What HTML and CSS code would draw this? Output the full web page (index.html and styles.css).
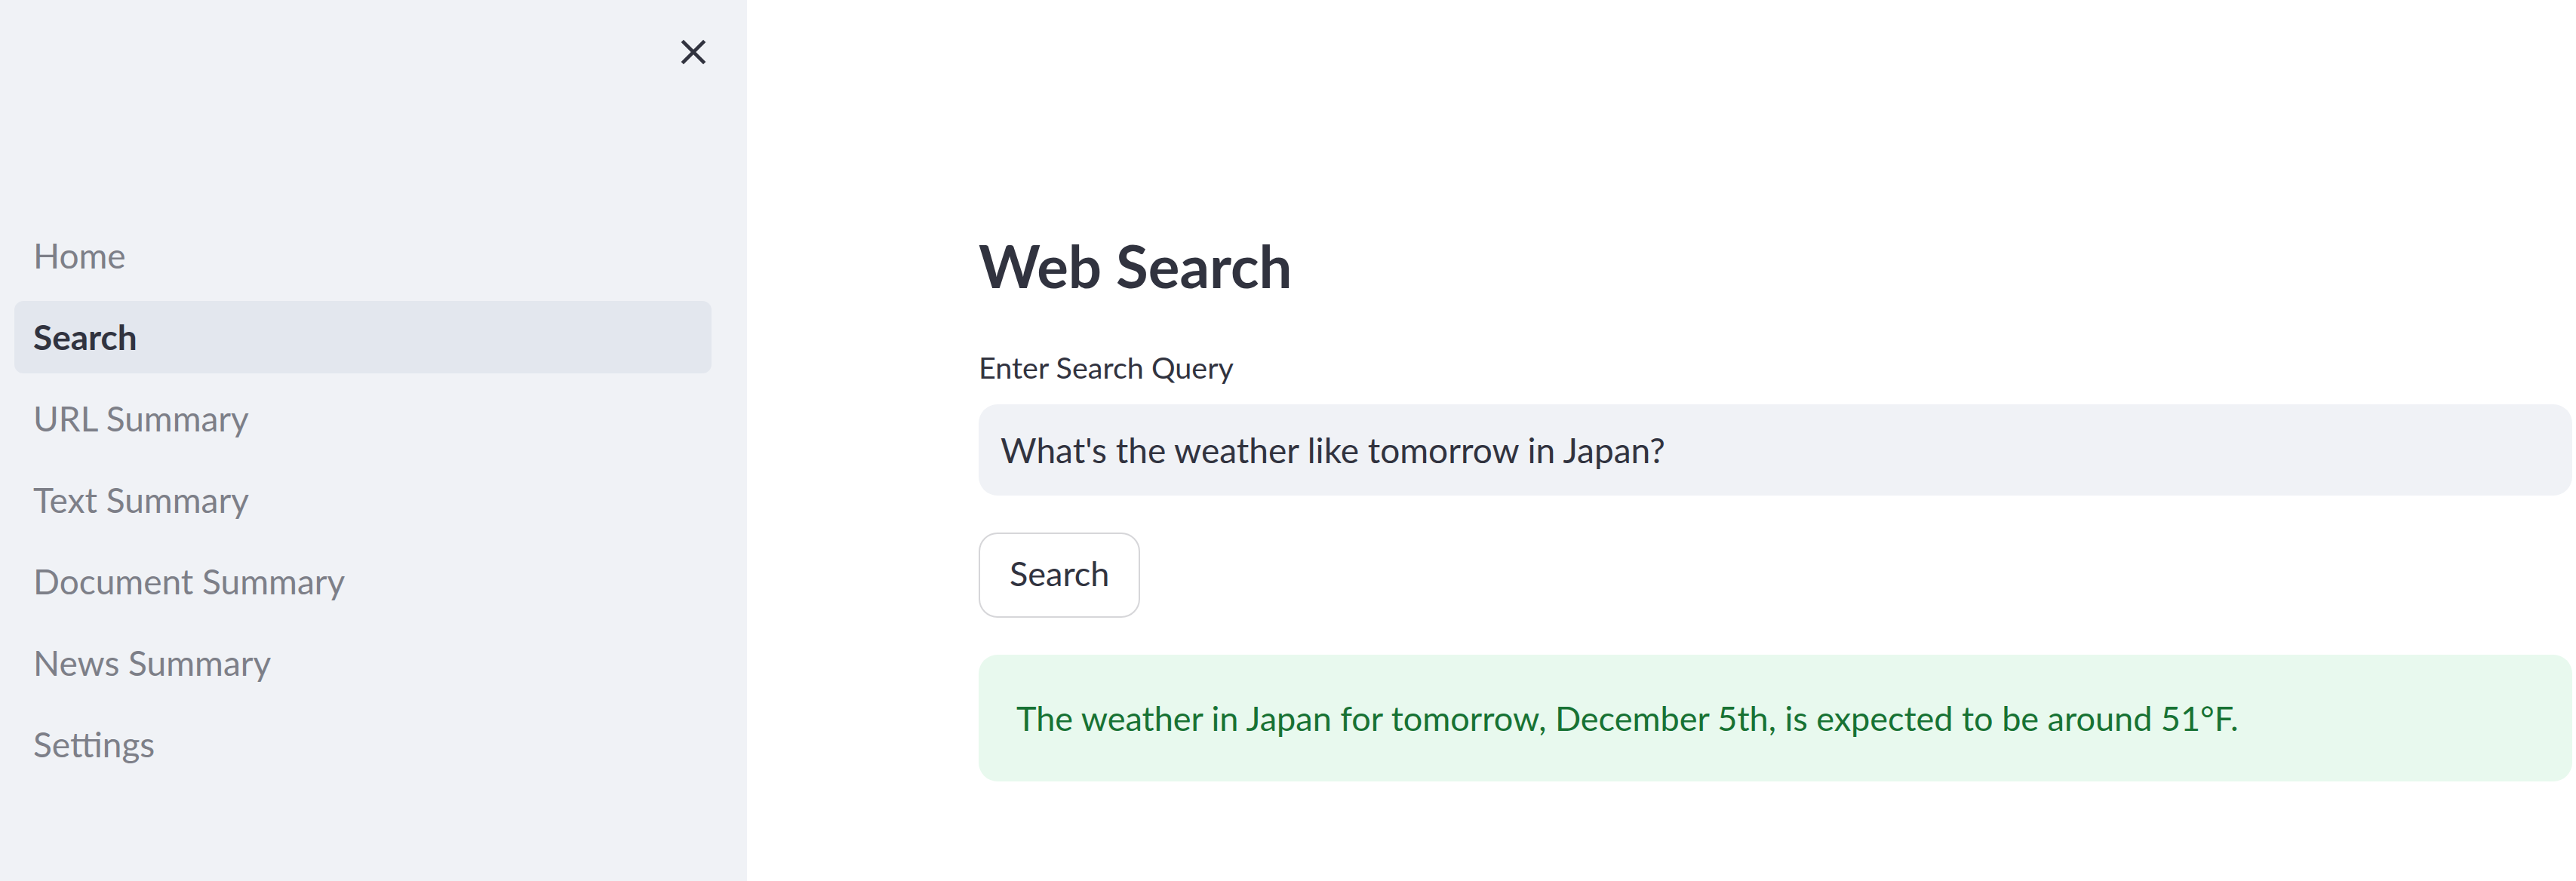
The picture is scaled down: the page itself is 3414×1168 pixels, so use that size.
FILE: index.html
```html
<!DOCTYPE html>
<html lang="en">
<head>
<meta charset="utf-8">
<title>Web Search</title>
<link rel="stylesheet" href="styles.css">
</head>
<body>
<div class="app">
  <aside class="sidebar">
    <div class="sidebar-header">
      <button class="close-btn" aria-label="Close sidebar">
        <svg viewBox="0 0 24 24" width="56" height="56"><path d="M19 6.41L17.59 5 12 10.59 6.41 5 5 6.41 10.59 12 5 17.59 6.41 19 12 13.41 17.59 19 19 17.59 13.41 12z"/></svg>
      </button>
    </div>
    <nav class="nav">
      <a class="nav-item">Home</a>
      <a class="nav-item active">Search</a>
      <a class="nav-item">URL Summary</a>
      <a class="nav-item">Text Summary</a>
      <a class="nav-item">Document Summary</a>
      <a class="nav-item">News Summary</a>
      <a class="nav-item">Settings</a>
    </nav>
  </aside>
  <main class="main">
    <h1 class="title">Web Search</h1>
    <label class="field-label" for="q">Enter Search Query</label>
    <input class="text-input" id="q" type="text" value="What's the weather like tomorrow in Japan?">
    <button class="btn">Search</button>
    <div class="alert-success">The weather in Japan for tomorrow, December 5th, is expected to be around 51°F.</div>
  </main>
</div>
</body>
</html>
```
FILE: styles.css
```css
* { box-sizing: border-box; }
html, body { margin: 0; padding: 0; height: 100%; }
body {
  font-family: "Lato", "Liberation Sans", sans-serif;
  color: #31333f;
  background: #ffffff;
  overflow: hidden;
}
.app {
  display: flex;
  height: 1168px;
}
.sidebar {
  width: 990px;
  flex: 0 0 990px;
  background: #f0f2f6;
  display: flex;
  flex-direction: column;
  padding: 0 47px 0 19px;
}
.sidebar-header {
  height: 291px;
  display: flex;
  justify-content: flex-end;
  align-items: flex-start;
  padding-top: 41px;
  margin-right: -4px;
}
.close-btn {
  width: 56px;
  height: 56px;
  padding: 0;
  border: none;
  background: transparent;
  display: flex;
}
.close-btn svg { fill: #31333f; }
.nav {
  display: flex;
  flex-direction: column;
  gap: 12px;
}
.nav-item {
  display: block;
  height: 96px;
  line-height: 96px;
  padding-left: 25px;
  font-size: 46px;
  color: #7d7f88;
  border-radius: 12px;
}
.nav-item.active {
  background: #e3e7ee;
  color: #31333f;
  font-weight: 700;
}
.main {
  flex: 1;
  padding: 306px 5px 0 307px;
  display: flex;
  flex-direction: column;
  align-items: flex-start;
}
.title {
  margin: 0;
  font-size: 78px;
  line-height: 93px;
  font-weight: 700;
  color: #31333f;
}
.field-label {
  margin-top: 64px;
  font-size: 39.5px;
  line-height: 48px;
  color: #31333f;
}
.text-input {
  margin-top: 25px;
  width: 100%;
  height: 121px;
  border: none;
  outline: none;
  border-radius: 25px;
  background: #f0f2f6;
  padding: 0 29px;
  font-family: inherit;
  font-size: 46px;
  color: #31333f;
}
.btn {
  margin-top: 49px;
  height: 113px;
  padding: 0 39px 4px;
  line-height: 105px;
  border: 2px solid #d6d6d9;
  border-radius: 25px;
  background: #ffffff;
  font-family: inherit;
  font-size: 45px;
  color: #31333f;
}
.alert-success {
  margin-top: 49px;
  width: 100%;
  padding: 50px;
  line-height: 68px;
  font-size: 45px;
  color: #177233;
  background: #e8f9ee;
  border-radius: 25px;
}
```
